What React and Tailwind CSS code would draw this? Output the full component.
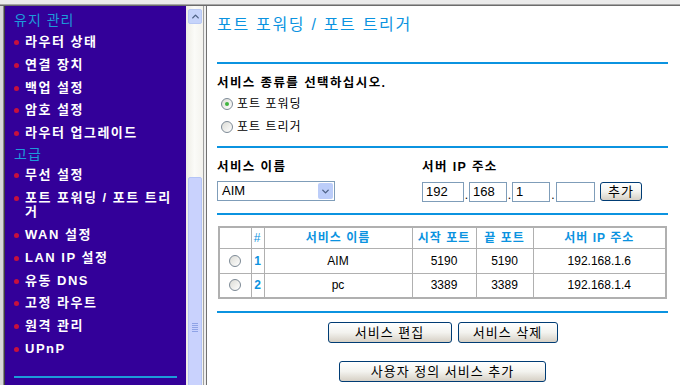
import React from 'react';
import { ChevronDown, ChevronUp } from 'lucide-react';

const FONT = { fontFamily: '"Liberation Sans", "Noto Sans CJK KR", sans-serif' };

const menu = [
  { type: 'head', label: '유지 관리' },
  { label: '라우터 상태' },
  { label: '연결 장치' },
  { label: '백업 설정' },
  { label: '암호 설정' },
  { label: '라우터 업그레이드' },
  { type: 'head2', label: '고급' },
  { label: '무선 설정' },
  { label: '포트 포워딩 / 포트 트리거' },
  { label: 'WAN 설정' },
  { label: 'LAN IP 설정' },
  { label: '유동 DNS' },
  { label: '고정 라우트' },
  { label: '원격 관리' },
  { label: 'UPnP' },
];

const rows = [
  { n: 1, name: 'AIM', start: '5190', end: '5190', ip: '192.168.1.6' },
  { n: 2, name: 'pc', start: '3389', end: '3389', ip: '192.168.1.4' },
];

const Radio = ({ checked }) => (
  <span className="relative inline-block w-[12px] h-[12px] rounded-full border border-[#7d8a96] bg-gradient-to-br from-[#dcdcd6] to-white">
    {checked && (
      <span className="absolute left-[3px] top-[3px] w-[4px] h-[4px] rounded-full bg-[#3fb43f]" />
    )}
  </span>
);

const XpButton = ({ children, className }) => (
  <button
    className={`flex items-center justify-center rounded-[3px] border border-[#003c74] bg-gradient-to-b from-white via-[#f3f3ef] to-[#d6d0c5] text-[13px] tracking-[1px] text-black ${className}`}
  >
    {children}
  </button>
);

const Sidebar = () => (
  <div className="flex w-[203px] shrink-0">
    <div className="w-[3px] bg-[#d8d8d8]" />
    <div className="w-[1px] bg-[#8a8a8a]" />
    <div className="w-[1px] bg-[#404040]" />
    <div className="w-[181px] bg-[#330099] pl-[9px] pt-[3px]">
      {menu.map((m, i) => {
        if (m.type === 'head') {
          return (
            <div key={i} className="h-[22px] flex items-center text-[14px] tracking-[1px] text-[#1d9bd9]">
              {m.label}
            </div>
          );
        }
        if (m.type === 'head2') {
          return (
            <div key={i} className="h-[19px] flex items-center text-[14px] tracking-[1px] text-[#1d9bd9]">
              {m.label}
            </div>
          );
        }
        return (
          <div key={i} className="flex py-[4px] pr-[8px] leading-[14.75px] text-[13px] tracking-[1.5px] font-bold text-white">
            <span className="mt-[5px] mr-[6px] w-[5px] h-[5px] shrink-0 rounded-full bg-[#c8103c]" />
            <span>{m.label}</span>
          </div>
        );
      })}
      <div className="mt-[15px] mr-[9px] h-[2px] bg-[#1d9bd9]" />
    </div>
    {/* scrollbar */}
    <div className="relative w-[17px] bg-gradient-to-r from-[#eeede5] via-[#fbfbf8] to-[#f4f3ee]">
      <div className="absolute left-[2px] top-[3px] w-[14px] h-[15px] rounded-[2px] border border-[#b8c8f4] bg-[#c6d4fb] flex items-center justify-center">
        <ChevronUp size={11} strokeWidth={3} className="text-[#4d6185]" />
      </div>
      <div className="absolute left-[2px] top-[171px] w-[14px] h-[240px] rounded-[2px] border border-[#b4c4f6] bg-[#c9d2fd] flex justify-center">
        <div className="mt-[145px] flex flex-col gap-[1px]">
          {[0, 1, 2, 3, 4].map((k) => (
            <span key={k} className="block w-[6px] h-[1px] bg-[#8fa3e6]" />
          ))}
        </div>
      </div>
    </div>
  </div>
);

const Line = ({ className }) => <div className={`h-[2px] bg-[#0b93e0] ${className}`} />;

const IpBox = ({ value, w }) => (
  <div className={`${w} h-[20px] border border-[#7f9db9] bg-white px-[3px] text-[13px] leading-[18px]`}>
    {value}
  </div>
);

export default function App() {
  return (
    <div className="w-[680px] h-[385px] overflow-hidden flex flex-col bg-white" style={FONT}>
      <div className="h-[4px] bg-[#ebebeb] shrink-0" />
      <div className="h-[1px] bg-[#a6a6a6] shrink-0" />
      <div className="h-[1px] bg-[#6c6c6c] shrink-0" />
      <div className="flex flex-1 min-h-0">
        <Sidebar />
        <div className="w-[1px] bg-[#a0a0a0]" />
        <div className="w-[2px] bg-[#efefef]" />
        <div className="w-[1px] bg-[#707070]" />
        <div className="flex-1 bg-white pl-[10px] pr-[12px]">
          <h1 className="pt-[9px] text-[16px] leading-[20px] tracking-[1.7px] text-[#0b93e0]">포트 포워딩 / 포트 트리거</h1>
          <Line className="mt-[27px]" />

          <div className="mt-[11px] text-[12.5px] leading-[16px] tracking-[1.4px] font-bold text-black">서비스 종류를 선택하십시오.</div>
          <div className="mt-[1px] h-[23px] flex items-center pl-[4px] gap-[4px] text-[12px] tracking-[1px]">
            <Radio checked />
            <span>포트 포워딩</span>
          </div>
          <div className="h-[23px] flex items-center pl-[4px] gap-[4px] text-[12px] tracking-[1px]">
            <Radio />
            <span>포트 트리거</span>
          </div>
          <Line className="mt-[8px]" />

          <div className="flex mt-[11px]">
            <div className="w-[205px]">
              <div className="text-[12.5px] leading-[16px] tracking-[1.4px] font-bold">서비스 이름</div>
              <div className="mt-[6px] w-[118px] h-[20px] border border-[#7f9db9] bg-white flex items-center justify-between pl-[4px] pr-[1px] text-[13px]">
                <span>AIM</span>
                <span className="w-[15px] h-[16px] rounded-[2px] bg-[#bccdf9] flex items-center justify-center">
                  <ChevronDown size={11} strokeWidth={3} className="text-[#4d6185]" />
                </span>
              </div>
            </div>
            <div>
              <div className="text-[12.5px] leading-[16px] tracking-[1.4px] font-bold">서버 IP 주소</div>
              <div className="mt-[7px] flex items-end">
                <IpBox value="192" w="w-[42px]" />
                <span className="w-[5px] text-center text-[12px] leading-[14px]">.</span>
                <IpBox value="168" w="w-[38px]" />
                <span className="w-[5px] text-center text-[12px] leading-[14px]">.</span>
                <IpBox value="1" w="w-[38px]" />
                <span className="w-[6px] text-center text-[12px] leading-[14px]">.</span>
                <IpBox value="" w="w-[39px]" />
                <XpButton className="ml-[5px] w-[42px] h-[19px] mb-[1px]">추가</XpButton>
              </div>
            </div>
          </div>
          <Line className="mt-[11px]" />

          <table className="mt-[11px] ml-[1px] w-[449px] border-collapse border-2 border-[#b0b0b0] text-[12px]">
            <thead>
              <tr className="h-[21px] text-[#0b93e0] font-bold tracking-[1px]">
                <th className="w-[32px] border border-[#b0b0b0]" />
                <th className="w-[13px] border border-[#b0b0b0] font-normal">#</th>
                <th className="w-[148px] border border-[#b0b0b0]">서비스 이름</th>
                <th className="w-[64px] border border-[#b0b0b0]">시작 포트</th>
                <th className="w-[57px] border border-[#b0b0b0]">끝 포트</th>
                <th className="border border-[#b0b0b0]">서버 IP 주소</th>
              </tr>
            </thead>
            <tbody>
              {rows.map((r) => (
                <tr key={r.n} className="h-[25px] text-center">
                  <td className="border border-[#b0b0b0]">
                    <div className="flex justify-center"><Radio /></div>
                  </td>
                  <td className="border border-[#b0b0b0] text-[#0b93e0] font-bold">{r.n}</td>
                  <td className="border border-[#b0b0b0]">{r.name}</td>
                  <td className="border border-[#b0b0b0]">{r.start}</td>
                  <td className="border border-[#b0b0b0]">{r.end}</td>
                  <td className="border border-[#b0b0b0]">{r.ip}</td>
                </tr>
              ))}
            </tbody>
          </table>
          <Line className="mt-[12px]" />

          <div className="mt-[9px] flex justify-center gap-[6px]">
            <XpButton className="w-[124px] h-[21px]">서비스 편집</XpButton>
            <XpButton className="w-[100px] h-[21px]">서비스 삭제</XpButton>
          </div>
          <div className="mt-[18px] flex justify-center">
            <XpButton className="w-[207px] h-[21px]">사용자 정의 서비스 추가</XpButton>
          </div>
        </div>
      </div>
    </div>
  );
}
